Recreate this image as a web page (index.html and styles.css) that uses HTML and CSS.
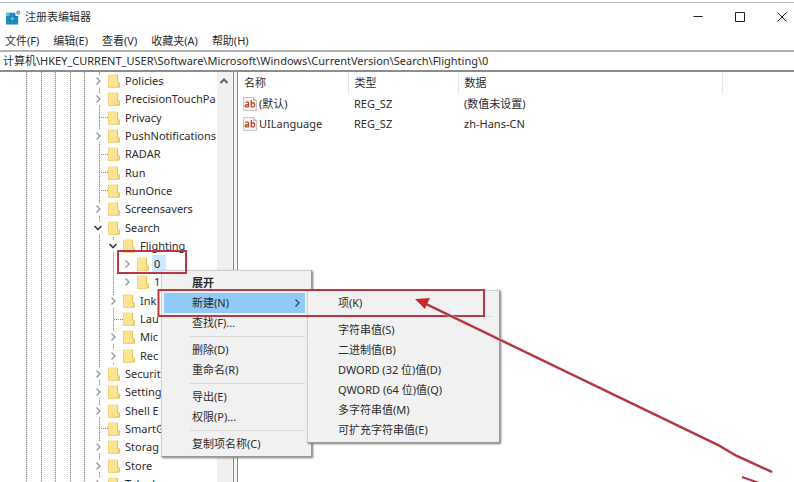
FILE: index.html
```html
<!DOCTYPE html>
<html lang="zh-Hans">
<head>
<meta charset="utf-8">
<title>注册表编辑器</title>
<link rel="stylesheet" href="styles.css">
</head>
<body>
<svg class="defs" aria-hidden="true">
  <symbol id="folder" viewBox="0 0 12 14">
    <path d="M0 1.5Q0 .5 1 .5H9.500V7L12 9V12.500Q12 13.500 11 13.500H0Z" fill="#f6dc83"/>
    <path d="M1 1.500H9V12.500H1Z" fill="#fde493"/>
    <path d="M9.500 1V8L11.500 9.500V13H8.500" fill="none" stroke="#e6bf58"/>
    <path d="M.5 1V13.500H11" fill="none" stroke="#efd27a"/>
  </symbol>
  <symbol id="closed" viewBox="0 0 12 12"><path d="M4.500 2.500L8 6L4.500 9.500" fill="none" stroke="#9a9a9a" stroke-width="1.400"/></symbol>
  <symbol id="open" viewBox="0 0 12 12"><path d="M2.500 4L6 7.500L9.500 4" fill="none" stroke="#404040" stroke-width="1.700"/></symbol>
  <symbol id="string" viewBox="0 0 14 14">
    <path d="M.5 .5H10.500L13.500 3.500V13.500H.5Z" fill="#fbf3f0" stroke="#c9c4c2"/>
    <path d="M10.500 .5V3.500H13.500" fill="none" stroke="#b9b4b2"/>
    <g fill="none" stroke="#c0472f" stroke-width="1.300"><path d="M2.500 5.500Q5.500 4 5.500 6.500V10.300M5.500 7.500Q2 7.500 2.200 9Q2.700 10.800 5.500 9.300M8.300 3V10.200M8.300 6.500Q11.500 4.500 11.700 7.700Q11.500 11 8.300 9.500"/></g>
  </symbol>
</svg>
<div class="window">
  <header class="titlebar">
    <svg class="app-icon" viewBox="0 0 16 16" aria-hidden="true">
      <path d="M0 3H10V6H13V15.500H0Z" fill="#1f8fc4"/>
      <path d="M0 3H4V7H0ZM5 7.500H8.500V11H5Z" fill="#5cc0e2"/>
      <path d="M4.500 3V15.500M8.800 3V15.500M0 7.200H13M0 11.300H13" stroke="#1674a3" stroke-width=".7"/>
      <circle cx="13" cy="2.800" r="2.200" fill="#6f9fb8"/>
      <circle cx="13" cy="2.800" r=".8" fill="#c4dce8"/>
    </svg>
    <h1>注册表编辑器</h1>
    <div class="controls">
      <button aria-label="最小化"><svg viewBox="0 0 12 12"><path d="M1.500 5.500H10.500"/></svg></button>
      <button aria-label="最大化"><svg viewBox="0 0 12 12"><path d="M1.500 1.500H10.500V10.500H1.500Z"/></svg></button>
      <button aria-label="关闭"><svg viewBox="0 0 12 12"><path d="M1.500 1.500L10.500 10.500M10.500 1.500L1.500 10.500"/></svg></button>
    </div>
  </header>
  <nav class="menubar">
    <button>文件(F)</button><button>编辑(E)</button><button>查看(V)</button><button>收藏夹(A)</button><button>帮助(H)</button>
  </nav>
  <input class="address" aria-label="地址" value="计算机\HKEY_CURRENT_USER\Software\Microsoft\Windows\CurrentVersion\Search\Flighting\0">
  <main class="panes">
    <section class="tree-pane">
      <div class="tree">
        <div class="guides" aria-hidden="true"><i></i><i></i><i></i><i></i><i></i><i></i></div>
        <ul class="rows">
          <li><svg class="exp"><use href="#closed"/></svg><svg class="folder"><use href="#folder"/></svg><span>Policies</span></li>
          <li><svg class="exp"><use href="#closed"/></svg><svg class="folder"><use href="#folder"/></svg><span>PrecisionTouchPa</span></li>
          <li><i class="leaf"></i><svg class="folder"><use href="#folder"/></svg><span>Privacy</span></li>
          <li><svg class="exp"><use href="#closed"/></svg><svg class="folder"><use href="#folder"/></svg><span>PushNotifications</span></li>
          <li><i class="leaf"></i><svg class="folder"><use href="#folder"/></svg><span>RADAR</span></li>
          <li><i class="leaf"></i><svg class="folder"><use href="#folder"/></svg><span>Run</span></li>
          <li><i class="leaf"></i><svg class="folder"><use href="#folder"/></svg><span>RunOnce</span></li>
          <li><svg class="exp"><use href="#closed"/></svg><svg class="folder"><use href="#folder"/></svg><span>Screensavers</span></li>
          <li><svg class="exp"><use href="#open"/></svg><svg class="folder"><use href="#folder"/></svg><span>Search</span></li>
          <li class="sub"><svg class="exp"><use href="#open"/></svg><svg class="folder"><use href="#folder"/></svg><span>Flighting</span></li>
          <li class="sub deep"><svg class="exp"><use href="#closed"/></svg><svg class="folder"><use href="#folder"/></svg><span class="selected">0</span></li>
          <li class="sub deep"><svg class="exp"><use href="#closed"/></svg><svg class="folder"><use href="#folder"/></svg><span>1</span></li>
          <li class="sub"><svg class="exp"><use href="#closed"/></svg><svg class="folder"><use href="#folder"/></svg><span>Ink</span></li>
          <li class="sub"><i class="leaf"></i><svg class="folder"><use href="#folder"/></svg><span>Lau</span></li>
          <li class="sub"><svg class="exp"><use href="#closed"/></svg><svg class="folder"><use href="#folder"/></svg><span>Mic</span></li>
          <li class="sub"><svg class="exp"><use href="#closed"/></svg><svg class="folder"><use href="#folder"/></svg><span>Rec</span></li>
          <li><svg class="exp"><use href="#closed"/></svg><svg class="folder"><use href="#folder"/></svg><span>Securit</span></li>
          <li><svg class="exp"><use href="#closed"/></svg><svg class="folder"><use href="#folder"/></svg><span>Setting</span></li>
          <li><svg class="exp"><use href="#closed"/></svg><svg class="folder"><use href="#folder"/></svg><span>Shell E</span></li>
          <li><i class="leaf"></i><svg class="folder"><use href="#folder"/></svg><span>SmartG</span></li>
          <li><svg class="exp"><use href="#closed"/></svg><svg class="folder"><use href="#folder"/></svg><span>Storag</span></li>
          <li><svg class="exp"><use href="#closed"/></svg><svg class="folder"><use href="#folder"/></svg><span>Store</span></li>
          <li><svg class="exp"><use href="#closed"/></svg><svg class="folder"><use href="#folder"/></svg><span>Telephony</span></li>
        </ul>
      </div>
      <div class="scrollbar"><svg viewBox="0 0 12 12" aria-hidden="true"><path d="M2.500 8L6 4.500L9.500 8"/></svg></div>
    </section>
    <div class="splitter"></div>
    <section class="values">
      <table>
        <colgroup><col class="narrow"><col class="narrow"><col class="wide"><col></colgroup>
        <thead><tr><th>名称</th><th>类型</th><th>数据</th><td></td></tr></thead>
        <tbody>
          <tr><td><div class="name"><svg><use href="#string"/></svg>(默认)</div></td><td>REG_SZ</td><td>(数值未设置)</td><td></td></tr>
          <tr><td><div class="name"><svg><use href="#string"/></svg>UILanguage</div></td><td>REG_SZ</td><td>zh-Hans-CN</td><td></td></tr>
        </tbody>
      </table>
    </section>
  </main>
</div>
<div class="menu context">
  <button class="default">展开</button>
  <button class="active">新建(N)<svg viewBox="0 0 12 12" aria-hidden="true"><path d="M4.500 2.500L8 6L4.500 9.500"/></svg></button>
  <button>查找(F)...</button>
  <hr>
  <button>删除(D)</button>
  <button>重命名(R)</button>
  <hr>
  <button>导出(E)</button>
  <button>权限(P)...</button>
  <hr>
  <button>复制项名称(C)</button>
</div>
<div class="menu submenu">
  <button>项(K)</button>
  <hr>
  <button>字符串值(S)</button>
  <button>二进制值(B)</button>
  <button>DWORD (32 位)值(D)</button>
  <button>QWORD (64 位)值(Q)</button>
  <button>多字符串值(M)</button>
  <button>可扩充字符串值(E)</button>
</div>
<svg class="marks" viewBox="0 0 794 482" aria-hidden="true">
  <g fill="none" stroke="#b83844" stroke-width="2">
    <path d="M118 251H186V273H118Z"/>
    <path d="M158.500 290H484V316H158.500Z"/>
  </g>
  <path d="M424 303L718 445L735 455L772 472" fill="none" stroke="#eeb0b4" stroke-width="3"/>
  <path d="M424 303L718 445L735 455L772 472M742 477L762 484" fill="none" stroke="#ac3540" stroke-width="2"/>
  <path d="M415 299L430 298L427 304L425 309Z" fill="#c8282c"/>
</svg>
</body>
</html>
```
FILE: styles.css
```css
* { box-sizing: border-box; }
body {
  margin: 0;
  overflow: hidden;
  background: #fff;
  color: #2c2c2c;
  font: 11px/18px "Noto Sans", "Noto Sans CJK SC", sans-serif;
}
button, input {
  font: inherit;
  color: inherit;
  border: 0;
  background: none;
  padding: 0;
  margin: 0;
  white-space: nowrap;
}
.defs { position: absolute; width: 0; height: 0; }
.window {
  display: flex;
  flex-direction: column;
  height: 100vh;
  padding-top: 2px;
}
.titlebar {
  display: flex;
  align-items: center;
  flex: none;
  height: 29px;
  border-top: 1px solid #b4c0c6;
  padding-left: 6px;
}
.app-icon { width: 15px; height: 15px; margin-right: 4px; }
h1 { font: inherit; margin: 0; flex: 1; }
.controls { display: flex; margin-right: -9px; }
.controls button { width: 42px; height: 28px; display: flex; align-items: center; justify-content: center; }
.controls svg { width: 12px; height: 12px; fill: none; stroke: #222; }
.menubar { display: flex; flex: none; gap: 14px; padding-left: 5px; height: 19px; }
.address {
  flex: none;
  width: 100%;
  height: 22px;
  padding: 0 0 2px 3px;
  border-top: 2px solid #b4b4b4;
  border-bottom: 2px solid #8c8c8c;
}
.panes { display: flex; flex: 1; min-height: 0; }
.tree-pane { display: flex; width: 234px; min-height: 0; border-right: 1px solid #888; }
.tree { position: relative; display: flex; flex: 1; min-width: 0; overflow: hidden; }
.guides {
  position: absolute;
  left: 26px;
  top: 0;
  bottom: 0;
  width: 74px;
  display: flex;
  justify-content: space-between;
}
.guides i {
  width: 1px;
  flex: none;
  background: repeating-linear-gradient(#8c8c8c 0 1px, #dcdcdc 1px 2px);
}
.rows {
  position: relative;
  display: grid;
  grid-auto-rows: minmax(0, 1fr);
  flex: 1;
  min-width: 0;
  margin: 0 0 -11px;
  padding: 0;
  list-style: none;
}
.rows li { display: flex; align-items: center; padding-left: 92px; position: relative; white-space: nowrap; }
.rows .sub { padding-left: 107px; }
.rows .deep { padding-left: 121px; }
.sub::before {
  content: "";
  position: absolute;
  left: 113px;
  top: 0;
  bottom: 0;
  width: 1px;
  background: repeating-linear-gradient(#999 0 1px, #e2e2e2 1px 2px);
}
.exp { width: 12px; height: 12px; margin-right: 4px; flex: none; background: #fff; position: relative; }
.leaf { width: 9px; height: 1px; margin: 0 0 0 7px; flex: none; border-top: 1px dotted #888; }
.folder { width: 12px; height: 14px; flex: none; margin-right: 3px; }
.rows span { padding: 0 2px; line-height: 18px; }
.rows .selected { background: #cce8ff; padding-right: 6px; }
.scrollbar { width: 16px; flex: none; background: #f0f0f0; }
.scrollbar svg { width: 12px; height: 12px; display: block; margin: 3px 0 0 1px; fill: none; stroke: #606060; stroke-width: 2; }
.splitter { width: 4px; flex: none; background: #f4f4f4; border-right: 1px solid #888; }
.values { flex: 1; min-width: 0; }
table { width: 100%; border-collapse: collapse; table-layout: fixed; }
.narrow { width: 110px; }
.wide { width: 264px; }
th, td { font-weight: 400; text-align: left; padding: 0 0 0 6px; height: 20px; line-height: 18px; }
thead th { height: 22px; border-right: 1px solid #e6e6e6; }
.name { display: flex; align-items: center; gap: 2px; margin-left: -1px; }
.name svg { width: 14px; height: 14px; }
.menu {
  position: absolute;
  display: flex;
  flex-direction: column;
  padding: 2px 6px 2px 2px;
  background: #f1f1f1;
  border: 1px solid #d0d0d0;
  border-right-color: #999;
  border-bottom-color: #999;
  box-shadow: 1px 1px 2px #777;
}
.menu button { display: flex; align-items: center; height: 20px; padding-left: 28px; text-align: left; }
.menu hr { width: calc(100% - 26px); margin: 3px 0 3px 26px; border: 0; border-top: 1px solid #d8d8d8; }
.menu .active { background: #91c9f7; }
.menu .default { font-weight: 700; }
.active svg { width: 12px; height: 12px; margin-left: auto; margin-right: 2px; fill: none; stroke: #345; stroke-width: 1.3; }
.context { left: 161px; top: 270px; width: 151px; }
.submenu { left: 307px; top: 290px; width: 193px; }
.marks { position: absolute; left: 0; top: 0; width: 794px; height: 482px; pointer-events: none; }
```
